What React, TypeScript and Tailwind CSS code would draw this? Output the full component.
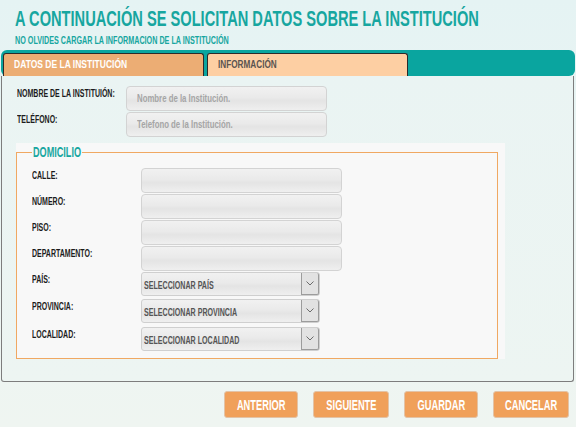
import React from 'react';

const Label = ({ children }: { children: React.ReactNode }) => (
  <div className="w-[109px] shrink-0 pt-[3px] leading-none">
    <span className="block w-max origin-left scale-x-[0.7] whitespace-nowrap text-[10px] leading-none font-bold text-[#1c1c1c]">
      {children}
    </span>
  </div>
);

const TextBox = ({ placeholder }: { placeholder?: string }) => (
  <div className="flex h-[25px] w-[201px] items-center rounded-[4px] border border-[#d3d3d3] bg-[linear-gradient(to_bottom,#f1f1f1_0%,#eaeaea_45%,#e4e4e4_60%,#efefef_100%)] pl-[10px]">
    {placeholder && (
      <span className="block w-max origin-left scale-x-[0.78] whitespace-nowrap text-[10px] leading-none font-bold text-[#a5a5a5]">
        {placeholder}
      </span>
    )}
  </div>
);

const Select = ({ text }: { text: string }) => (
  <div className="flex h-[24px] w-[179px] rounded-[3px] border border-[#cfcfcf] bg-[linear-gradient(to_bottom,#f1f1f1_0%,#eaeaea_45%,#e4e4e4_60%,#efefef_100%)]">
    <div className="flex flex-1 items-center pl-[2px] pt-[3px]">
      <span className="block w-max origin-left scale-x-[0.71] whitespace-nowrap text-[10px] leading-none font-bold text-[#555]">
        {text}
      </span>
    </div>
    <div className="flex w-[18px] items-center justify-center rounded-r-[2px] border-b border-l border-r border-[#9c9c9c] bg-[#e2e2e2]">
      <svg width="8" height="5" viewBox="0 0 8 5">
        <polyline points="0.5,0.5 4,4 7.5,0.5" fill="none" stroke="#6b6b6b" strokeWidth="1" />
      </svg>
    </div>
  </div>
);

const Button = ({ text, w }: { text: string; w: string }) => (
  <div className={`flex h-[27px] ${w} items-center justify-center rounded-[3px] border border-[#e3c3a6] bg-[#f0a05a]`}>
    <span className="block w-max scale-x-[0.62] whitespace-nowrap text-[15px] leading-none font-bold text-white">
      {text}
    </span>
  </div>
);

export default function App() {
  return (
    <div className="h-[427px] w-[576px] overflow-hidden bg-[linear-gradient(to_bottom,#e5f3f3_0%,#ebf5f3_50%,#eff5f1_100%)] font-['Liberation_Sans',Arial,sans-serif]">
      <div className="pl-[15px] pt-[8px]">
        <h1 className="origin-left scale-x-[0.665] whitespace-nowrap text-[22px] leading-none font-bold text-[#17a6a0]">
          A CONTINUACIÓN SE SOLICITAN DATOS SOBRE LA INSTITUCIÓN
        </h1>
        <p className="mt-[6px] origin-left scale-x-[0.72] whitespace-nowrap text-[10px] leading-none font-bold text-[#17a6a0]">
          NO OLVIDES CARGAR LA INFORMACION DE LA INSTITUCIÓN
        </p>
      </div>

      <div className="ml-[1px] mt-[4px] flex h-[26px] w-[574px] items-end gap-[3px] rounded-[6px] bg-[#0aa59f] pl-[2px]">
        <div className="flex h-[23px] w-[201px] items-center rounded-t-[3px] border border-b-0 border-[#2b2b2b] bg-[#ecad74] pl-[10px]">
          <span className="block w-max origin-left scale-x-[0.85] whitespace-nowrap text-[10px] leading-none font-bold text-white">
            DATOS DE LA INSTITUCIÓN
          </span>
        </div>
        <div className="flex h-[23px] w-[201px] items-center rounded-t-[3px] border border-b-0 border-[#2b2b2b] bg-[#fdcfa3] pl-[10px]">
          <span className="block w-max origin-left scale-x-[0.82] whitespace-nowrap text-[10px] leading-none font-bold text-[#5a5450]">
            INFORMACIÓN
          </span>
        </div>
      </div>

      <div className="ml-[1px] h-[306px] w-[573px] rounded-b-[3px] border border-t-0 border-[#7d7d7d] bg-[linear-gradient(to_bottom,#eaf4f3_0%,#edf5f2_100%)] pt-[10px]">
        <div className="pl-[15px]">
          <div className="flex h-[26px]">
            <Label>NOMBRE DE LA INSTITUIÓN:</Label>
            <TextBox placeholder="Nombre de la Institución." />
          </div>
          <div className="flex h-[26px]">
            <Label>TELÉFONO:</Label>
            <TextBox placeholder="Telefono de la Institución." />
          </div>
        </div>

        <div className="ml-[14px] mt-[5px] h-[216px] w-[489px] bg-[#f8f8f8] pt-[9px]">
          <div className="relative h-[207px] w-[482px] border border-[#f0a862] pl-[15px] pt-[15px]">
            <div className="absolute -top-[8px] left-[15px] h-[14px] w-[50px] overflow-hidden bg-[#f8f8f8] px-[1px] leading-none">
              <span className="block w-max origin-left scale-x-[0.65] whitespace-nowrap text-[14px] leading-none font-bold text-[#17a6a0]">
                DOMICILIO
              </span>
            </div>
            <div className="flex h-[26px]">
              <Label>CALLE:</Label>
              <TextBox />
            </div>
            <div className="flex h-[26px]">
              <Label>NÚMERO:</Label>
              <TextBox />
            </div>
            <div className="flex h-[26px]">
              <Label>PISO:</Label>
              <TextBox />
            </div>
            <div className="flex h-[26px]">
              <Label>DEPARTAMENTO:</Label>
              <TextBox />
            </div>
            <div className="flex h-[27px]">
              <Label>PAÍS:</Label>
              <Select text="SELECCIONAR PAÍS" />
            </div>
            <div className="flex h-[28px]">
              <Label>PROVINCIA:</Label>
              <Select text="SELECCIONAR PROVINCIA" />
            </div>
            <div className="flex h-[26px]">
              <Label>LOCALIDAD:</Label>
              <Select text="SELECCIONAR LOCALIDAD" />
            </div>
          </div>
        </div>
      </div>

      <div className="mt-[9px] flex justify-end gap-[15px] pr-[7px]">
        <Button text="ANTERIOR" w="w-[74px]" />
        <Button text="SIGUIENTE" w="w-[76px]" />
        <Button text="GUARDAR" w="w-[74px]" />
        <Button text="CANCELAR" w="w-[76px]" />
      </div>
    </div>
  );
}
